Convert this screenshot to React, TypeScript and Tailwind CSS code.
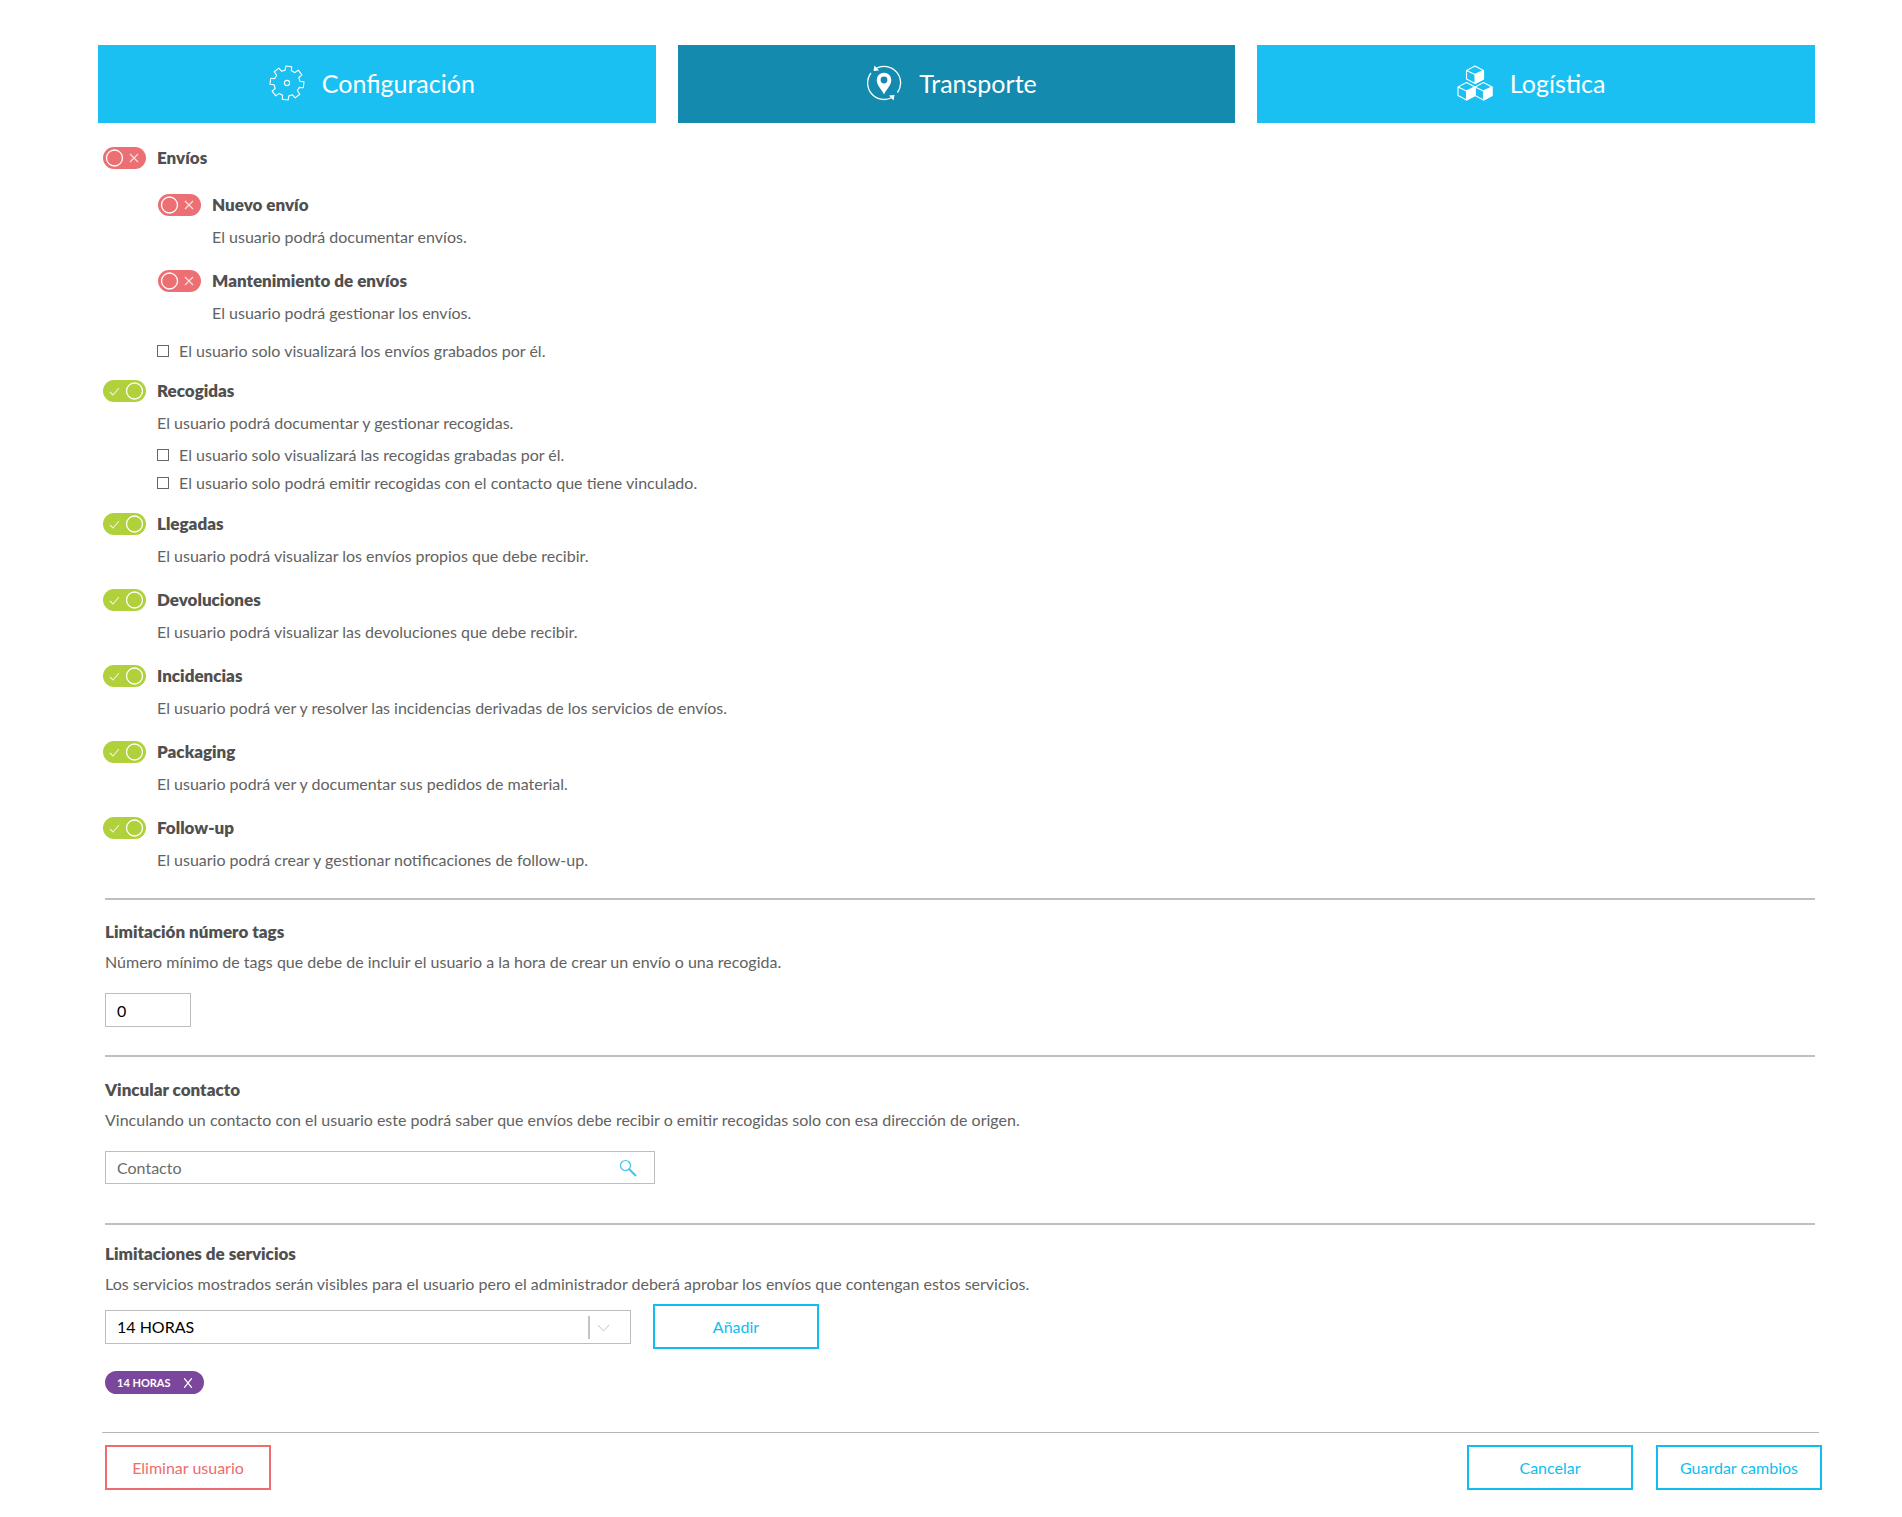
import { useState, type ReactNode } from "react";

// Eight tapered teeth around an 18,18 centre
const gearPoints = Array.from({ length: 8 }, (_, i) => {
  const tooth = i * 45 + 6;
  return [
    [tooth - 14, 13],
    [tooth - 10, 17],
    [tooth + 10, 17],
    [tooth + 14, 13],
  ].map(([deg, r]) => {
    const rad = ((deg - 90) * Math.PI) / 180;
    return `${(18 + r * Math.cos(rad)).toFixed(1)},${(18 + r * Math.sin(rad)).toFixed(1)}`;
  });
})
  .flat()
  .join(" ");

function GearIcon() {
  return (
    <svg className="h-9 w-9" viewBox="0 0 36 36" fill="none" stroke="currentColor" strokeWidth="1.1" strokeLinejoin="round">
      <polygon points={gearPoints} />
      <circle cx="18" cy="18" r="2.6" />
    </svg>
  );
}

function RouteIcon() {
  return (
    <svg className="h-9 w-9" viewBox="0 0 36 36" fill="none" stroke="currentColor" strokeWidth="1.3">
      <path d="M10 3.500 A16.500 16.500 0 0 1 31.500 27.500" />
      <path d="M5 8 A16.500 16.500 0 0 0 26 32.500" />
      <path d="M8.500 0.500 L7.500 6 L13 5.500 Z M27.500 35.500 L28.500 30 L23 30.500 Z" fill="currentColor" stroke="none" />
      <path
        d="M18 29.500 C16 24.500 10.700 20.500 10.700 15 A7.300 7.300 0 0 1 25.300 15 C25.300 20.500 20 24.500 18 29.500 Z M18 11.600 A3.400 3.400 0 1 0 18 18.400 A3.400 3.400 0 1 0 18 11.600 Z"
        fill="currentColor"
        fillRule="evenodd"
        stroke="none"
      />
    </svg>
  );
}

function Cube({ x, y }: { x: number; y: number }) {
  return (
    <g transform={`translate(${x} ${y})`}>
      <path d="M8.500 0 L17 4.500 V13 L8.500 17.500 L0 13 V4.500 Z M0 4.500 L8.500 8.500 L17 4.500" />
      <path d="M8.500 8.500 L17 4.500 V13 L8.500 17.500 Z" fill="currentColor" />
    </g>
  );
}

function BoxesIcon() {
  return (
    <svg className="h-9 w-9" viewBox="0 0 36 36" fill="none" stroke="currentColor" strokeWidth="1.1" strokeLinejoin="round">
      <Cube x={9.5} y={1} />
      <Cube x={1} y={17.5} />
      <Cube x={18} y={17.5} />
    </svg>
  );
}

const tabs = [
  { id: "configuracion", label: "Configuración", icon: <GearIcon /> },
  { id: "transporte", label: "Transporte", icon: <RouteIcon /> },
  { id: "logistica", label: "Logística", icon: <BoxesIcon /> },
];

function Toggle({ label, initial }: { label: string; initial: boolean }) {
  const [on, setOn] = useState(initial);

  return (
    <div className="flex h-6 items-center gap-[11px]">
      <button
        type="button"
        role="switch"
        aria-checked={on}
        aria-label={label}
        onClick={() => setOn(!on)}
        className={`h-[22px] w-[43px] shrink-0 rounded-full ${on ? "bg-[#b1d13c]" : "bg-[#ec7073]"}`}
      >
        <svg className="h-[22px] w-[43px]" viewBox="0 0 43 22" fill="none" stroke="white">
          {on ? (
            <>
              <path d="M7 12 L10 15 L16 8" strokeWidth="1.1" strokeOpacity="0.8" />
              <circle cx="31.5" cy="11" r="8" strokeWidth="1.3" />
            </>
          ) : (
            <>
              <circle cx="11.5" cy="11" r="8" strokeWidth="1.3" />
              <path d="M27 7 L35 15 M35 7 L27 15" strokeWidth="1.1" strokeOpacity="0.8" />
            </>
          )}
        </svg>
      </button>
      <h3 className="text-[17px] font-extrabold text-[#505050]">{label}</h3>
    </div>
  );
}

function Permission({
  label,
  description,
  on = false,
}: {
  label: string;
  description?: string;
  on?: boolean;
}) {
  return (
    <div>
      <Toggle label={label} initial={on} />
      {description && <p className="mt-2 pl-[54px]">{description}</p>}
    </div>
  );
}

function CheckRow({ id, children }: { id: string; children: ReactNode }) {
  return (
    <div className="flex h-6 items-center gap-[10px] pl-[54px]">
      <input id={id} type="checkbox" className="h-3 w-3 shrink-0 appearance-none border border-[#666] bg-white checked:bg-[#666]" />
      <label htmlFor={id}>{children}</label>
    </div>
  );
}

function Button({ tone = "blue", children }: { tone?: "blue" | "red"; children: ReactNode }) {
  return (
    <button
      type="button"
      className={`h-[45px] w-[166px] border-2 bg-white text-base ${
        tone === "red" ? "border-[#ee6c6c] text-[#ee6c6c]" : "border-[#10bdf0] text-[#10bdf0]"
      }`}
    >
      {children}
    </button>
  );
}

export default function App() {
  const [active, setActive] = useState("transporte");
  const [services, setServices] = useState(["14 HORAS"]);

  return (
    <main className="min-h-screen bg-white px-20 pt-[45px] pb-7 font-['Lato',sans-serif] text-base leading-6 text-[#626262]">
      <nav className="ml-[18px] mr-[7px] grid grid-cols-3 gap-[22px]">
        {tabs.map((tab) => (
          <button
            key={tab.id}
            type="button"
            onClick={() => setActive(tab.id)}
            className={`flex h-[78px] items-center justify-center gap-[17px] pr-[10px] pb-[3px] text-[25px] text-white ${
              active === tab.id ? "bg-[#148aae]" : "bg-[#1bc0f2]"
            }`}
          >
            {tab.icon}
            <span>{tab.label}</span>
          </button>
        ))}
      </nav>

      <section className="mt-[23px] ml-[23px]">
        <Permission label="Envíos" />
        <div className="mt-[23px] mb-[14px] ml-[55px] space-y-5">
          <Permission label="Nuevo envío" description="El usuario podrá documentar envíos." />
          <Permission label="Mantenimiento de envíos" description="El usuario podrá gestionar los envíos." />
        </div>
        <CheckRow id="own-shipments">El usuario solo visualizará los envíos grabados por él.</CheckRow>

        <div className="mt-4">
          <Permission on label="Recogidas" description="El usuario podrá documentar y gestionar recogidas." />
          <div className="mt-2 space-y-1">
            <CheckRow id="own-pickups">El usuario solo visualizará las recogidas grabadas por él.</CheckRow>
            <CheckRow id="linked-pickups">
              El usuario solo podrá emitir recogidas con el contacto que tiene vinculado.
            </CheckRow>
          </div>
        </div>

        <div className="mt-[17px] space-y-5">
          <Permission on label="Llegadas" description="El usuario podrá visualizar los envíos propios que debe recibir." />
          <Permission on label="Devoluciones" description="El usuario podrá visualizar las devoluciones que debe recibir." />
          <Permission
            on
            label="Incidencias"
            description="El usuario podrá ver y resolver las incidencias derivadas de los servicios de envíos."
          />
          <Permission on label="Packaging" description="El usuario podrá ver y documentar sus pedidos de material." />
          <Permission on label="Follow-up" description="El usuario podrá crear y gestionar notificaciones de follow-up." />
        </div>
      </section>

      <section className="mt-[26px] mr-[7px] ml-[25px] border-t-2 border-[#c0c0c0] pt-5">
        <h3 className="text-[17px] font-extrabold text-[#505050]">
          <label htmlFor="min-tags">Limitación número tags</label>
        </h3>
        <p className="mt-[6px]">Número mínimo de tags que debe de incluir el usuario a la hora de crear un envío o una recogida.</p>
        <input
          id="min-tags"
          type="text"
          inputMode="numeric"
          defaultValue="0"
          className="mt-[19px] block h-[34px] w-[86px] border border-[#bdbdbd] px-[11px] text-black outline-none"
        />
      </section>

      <section className="mt-7 mr-[7px] ml-[25px] border-t-2 border-[#c0c0c0] pt-[21px]">
        <h3 className="text-[17px] font-extrabold text-[#505050]">
          <label htmlFor="contact">Vincular contacto</label>
        </h3>
        <p className="mt-[6px]">
          Vinculando un contacto con el usuario este podrá saber que envíos debe recibir o emitir recogidas solo con esa
          dirección de origen.
        </p>
        <div className="mt-[19px] flex h-[33px] w-[550px] items-center border border-[#bdbdbd] pr-[17px] pl-[11px]">
          <input
            id="contact"
            type="text"
            placeholder="Contacto"
            className="min-w-0 flex-1 outline-none placeholder:text-[#6b6b6b]"
          />
          <button type="button" aria-label="Buscar contacto" className="text-[#35c8f3]">
            <svg className="h-[18px] w-[18px]" viewBox="0 0 18 18" fill="none" stroke="currentColor">
              <circle cx="6.5" cy="6.5" r="5" strokeWidth="1.2" />
              <path d="M10 10 L17 17" strokeWidth="2" />
            </svg>
          </button>
        </div>
      </section>

      <section className="mt-[39px] mr-[7px] ml-[25px] border-t-2 border-[#c0c0c0] pt-[17px]">
        <h3 className="text-[17px] font-extrabold text-[#505050]">
          <label htmlFor="service">Limitaciones de servicios</label>
        </h3>
        <p className="mt-[6px]">
          Los servicios mostrados serán visibles para el usuario pero el administrador deberá aprobar los envíos que
          contengan estos servicios.
        </p>
        <div className="mt-2 flex items-center gap-[22px]">
          <div className="relative h-[34px] w-[526px] border border-[#bdbdbd]">
            <select id="service" className="h-full w-full appearance-none bg-white px-[11px] text-black outline-none">
              <option>14 HORAS</option>
            </select>
            <svg
              className="pointer-events-none absolute top-[5px] right-[20px] h-[23px] w-[22px]"
              viewBox="0 0 22 23"
              fill="none"
              stroke="#c4c4c4"
            >
              <path d="M1 0 V23" strokeWidth="2" />
              <path d="M10 9 L15.500 15 L21 9" />
            </svg>
          </div>
          <Button>Añadir</Button>
        </div>
        <ul className="mt-[22px] flex h-[23px] gap-2">
          {services.map((name) => (
            <li key={name} className="flex items-center gap-[13px] rounded-full bg-[#7a479c] px-3 text-[11px] font-bold text-white">
              {name}
              <button
                type="button"
                aria-label={`Quitar ${name}`}
                onClick={() => setServices(services.filter((s) => s !== name))}
              >
                <svg className="h-[10px] w-2" viewBox="0 0 8 10" fill="none" stroke="currentColor" strokeWidth="1.2">
                  <path d="M0 0 L8 10 M8 0 L0 10" />
                </svg>
              </button>
            </li>
          ))}
        </ul>
      </section>

      <footer className="mt-[38px]">
        <hr className="mr-[3px] ml-[22px] border-[#b5b5b5]" />
        <div className="mt-3 ml-[25px] flex gap-[23px]">
          <div className="mr-auto">
            <Button tone="red">Eliminar usuario</Button>
          </div>
          <Button>Cancelar</Button>
          <Button>Guardar cambios</Button>
        </div>
      </footer>
    </main>
  );
}
